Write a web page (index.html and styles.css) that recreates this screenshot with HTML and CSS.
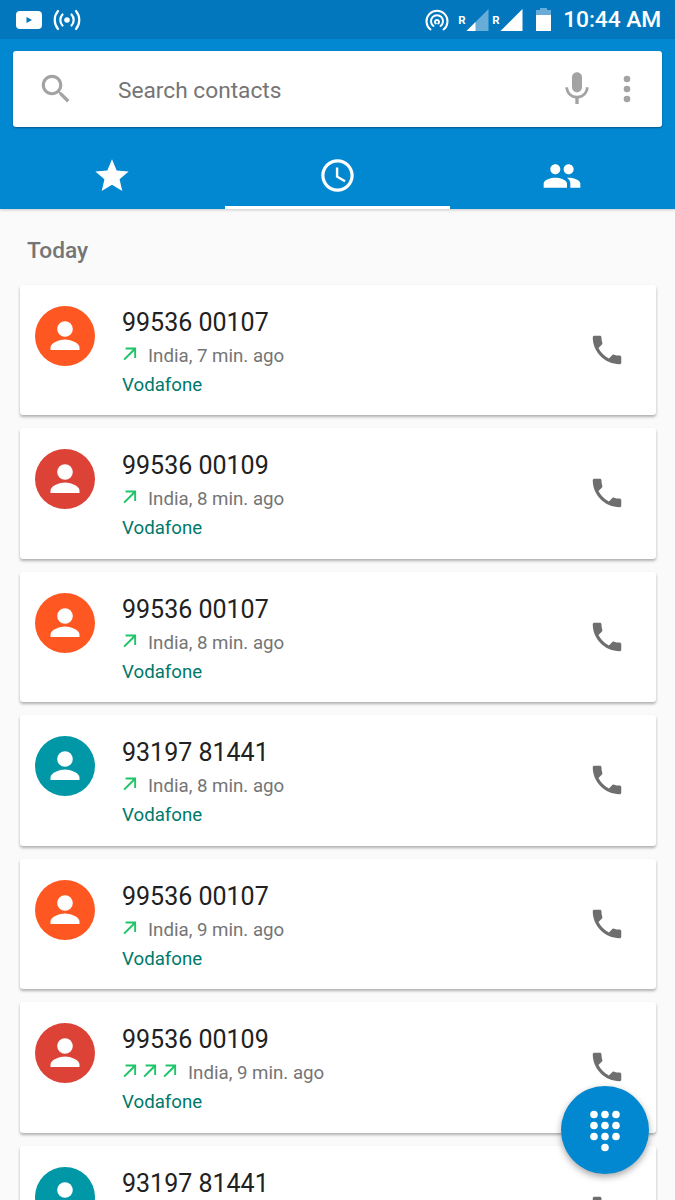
FILE: index.html
```html
<!DOCTYPE html>
<html lang="en">
<head>
<meta charset="utf-8">
<title>Phone</title>
<link rel="stylesheet" href="styles.css">
</head>
<body>
<svg class="defs" aria-hidden="true">
  <symbol id="phone" viewBox="0 0 24 24"><path d="M6.62 10.79c1.44 2.83 3.76 5.14 6.59 6.59l2.2-2.2c.27-.27.67-.36 1.02-.24 1.12.37 2.33.57 3.57.57.55 0 1 .45 1 1V20c0 .55-.45 1-1 1-9.39 0-17-7.61-17-17 0-.55.45-1 1-1h3.5c.55 0 1 .45 1 1 0 1.25.2 2.45.57 3.57.11.35.03.74-.25 1.02l-2.2 2.2z"/></symbol>
  <symbol id="person" viewBox="0 0 60 60"><circle cx="30" cy="23" r="7.8"/><path d="M15.500 44v-2.500c0-5 9.500-8 14.500-8s14.500 3 14.500 8V44z"/></symbol>
  <symbol id="made" viewBox="0 0 16 16"><path d="M3.600 1.600v1.900h7.200L1.400 12.900l1.400 1.400 9.400-9.400v7.200h1.900V1.600z"/></symbol>
</svg>
<div class="screen">
  <header class="top">
    <div class="status">
      <div class="status-left">
        <svg class="yt" viewBox="0 0 26 18"><rect width="26" height="18" rx="4" fill="#fff"/><path d="M10.500 6l5.500 3-5.500 3z" fill="#0277bd"/></svg>
        <svg class="cast" viewBox="0 0 28 22" fill="none" stroke="#fff" stroke-width="2.200" stroke-linecap="round"><circle cx="14" cy="11" r="2.800" fill="#fff" stroke="none"/><path d="M9.500 5.500a8 8 0 0 0 0 11M18.500 5.500a8 8 0 0 1 0 11M5 2a14 14 0 0 0 0 18M23 2a14 14 0 0 1 0 18"/></svg>
      </div>
      <div class="status-right">
        <svg class="hotspot" viewBox="0 0 24 22" fill="none" stroke="#fff" stroke-width="2" stroke-linecap="round"><path d="M5.500 20.500a10.500 10.500 0 1 1 13 0M8.500 17a6 6 0 1 1 7 0"/><path d="M10.800 14.500a2 2 0 1 1 2.400 0"/></svg>
        <span class="r r-one">R</span>
        <svg class="sig sig-one" viewBox="0 0 22 22"><path d="M22 0v22H0z" fill="#fff" fill-opacity=".4"/><path d="M9 13v9H0z" fill="#fff"/></svg>
        <span class="r r-two">R</span>
        <svg class="sig sig-two" viewBox="0 0 22 22"><path d="M22 0v22H0z" fill="#fff"/></svg>
        <svg class="batt" viewBox="0 0 15 23"><path d="M4 0h7v2h4v21H0V2h4z" fill="#fff" fill-opacity=".4"/><path d="M0 7h15v16H0z" fill="#fff"/></svg>
        <span class="clock-text">10:44 AM</span>
      </div>
    </div>
    <div class="search">
      <svg class="ic-search" viewBox="0 0 24 24"><path d="M15.500 14h-.79l-.28-.27C15.410 12.590 16 11.110 16 9.500 16 5.910 13.090 3 9.500 3S3 5.910 3 9.500 5.910 16 9.500 16c1.610 0 3.090-.59 4.230-1.570l.27.28v.79l5 4.990L20.490 19l-4.990-5zm-6 0C7.010 14 5 11.990 5 9.500S7.010 5 9.500 5 14 7.010 14 9.500 11.990 14 9.500 14z"/></svg>
      <span class="search-label">Search contacts</span>
      <svg class="ic-mic" viewBox="0 0 24 24"><path d="M12 14c1.660 0 2.990-1.340 2.990-3L15 5c0-1.660-1.340-3-3-3S9 3.340 9 5v6c0 1.660 1.340 3 3 3zm5.300-3c0 3-2.540 5.100-5.300 5.100S6.700 14 6.700 11H5c0 3.410 2.720 6.230 6 6.720V21h2v-3.280c3.280-.48 6-3.300 6-6.720h-1.700z"/></svg>
      <svg class="ic-more" viewBox="0 0 8 28"><circle cx="4" cy="4" r="3.300"/><circle cx="4" cy="14" r="3.300"/><circle cx="4" cy="24" r="3.300"/></svg>
    </div>
    <nav class="tabs">
      <div class="tab"><svg class="tab-star" viewBox="0 0 24 24"><path d="M12 17.270L18.180 21l-1.640-7.030L22 9.240l-7.190-.61L12 2 9.190 8.630 2 9.240l5.460 4.730L5.820 21z"/></svg></div>
      <div class="tab tab-active"><svg class="tab-clock" viewBox="0 0 24 24"><path d="M11.990 2C6.470 2 2 6.480 2 12s4.470 10 9.990 10C17.520 22 22 17.520 22 12S17.520 2 11.990 2zM12 20c-4.420 0-8-3.580-8-8s3.580-8 8-8 8 3.580 8 8-3.580 8-8 8zm.5-13H11v6l5.250 3.150.75-1.230-4.500-2.670z"/></svg></div>
      <div class="tab"><svg class="tab-people" viewBox="0 0 24 24"><path d="M16 11c1.660 0 2.990-1.340 2.990-3S17.660 5 16 5c-1.660 0-3 1.340-3 3s1.340 3 3 3zm-8 0c1.660 0 2.990-1.340 2.990-3S9.660 5 8 5C6.340 5 5 6.340 5 8s1.340 3 3 3zm0 2c-2.330 0-7 1.170-7 3.500V19h14v-2.500c0-2.330-4.670-3.500-7-3.500zm8 0c-.29 0-.62.02-.97.05 1.160.84 1.970 1.970 1.970 3.450V19h6v-2.500c0-2.330-4.670-3.500-7-3.500z"/></svg></div>
    </nav>
  </header>

  <main class="list">
    <h2 class="day">Today</h2>

    <article class="card">
      <div class="avatar orange"><svg><use href="#person"/></svg></div>
      <div class="info">
        <div class="num">99536 00107</div>
        <div class="meta"><span class="arrows"><svg><use href="#made"/></svg></span><span>India, 7 min. ago</span></div>
        <div class="sim">Vodafone</div>
      </div>
      <svg class="call"><use href="#phone"/></svg>
    </article>

    <article class="card">
      <div class="avatar red"><svg><use href="#person"/></svg></div>
      <div class="info">
        <div class="num">99536 00109</div>
        <div class="meta"><span class="arrows"><svg><use href="#made"/></svg></span><span>India, 8 min. ago</span></div>
        <div class="sim">Vodafone</div>
      </div>
      <svg class="call"><use href="#phone"/></svg>
    </article>

    <article class="card">
      <div class="avatar orange"><svg><use href="#person"/></svg></div>
      <div class="info">
        <div class="num">99536 00107</div>
        <div class="meta"><span class="arrows"><svg><use href="#made"/></svg></span><span>India, 8 min. ago</span></div>
        <div class="sim">Vodafone</div>
      </div>
      <svg class="call"><use href="#phone"/></svg>
    </article>

    <article class="card">
      <div class="avatar teal"><svg><use href="#person"/></svg></div>
      <div class="info">
        <div class="num">93197 81441</div>
        <div class="meta"><span class="arrows"><svg><use href="#made"/></svg></span><span>India, 8 min. ago</span></div>
        <div class="sim">Vodafone</div>
      </div>
      <svg class="call"><use href="#phone"/></svg>
    </article>

    <article class="card">
      <div class="avatar orange"><svg><use href="#person"/></svg></div>
      <div class="info">
        <div class="num">99536 00107</div>
        <div class="meta"><span class="arrows"><svg><use href="#made"/></svg></span><span>India, 9 min. ago</span></div>
        <div class="sim">Vodafone</div>
      </div>
      <svg class="call"><use href="#phone"/></svg>
    </article>

    <article class="card">
      <div class="avatar red"><svg><use href="#person"/></svg></div>
      <div class="info">
        <div class="num">99536 00109</div>
        <div class="meta"><span class="arrows"><svg><use href="#made"/></svg><svg><use href="#made"/></svg><svg><use href="#made"/></svg></span><span>India, 9 min. ago</span></div>
        <div class="sim">Vodafone</div>
      </div>
      <svg class="call"><use href="#phone"/></svg>
    </article>

    <article class="card">
      <div class="avatar teal"><svg><use href="#person"/></svg></div>
      <div class="info">
        <div class="num">93197 81441</div>
      </div>
      <svg class="call"><use href="#phone"/></svg>
    </article>
  </main>

  <button class="fab" aria-label="Dial pad">
    <svg viewBox="0 0 34 44"><circle cx="6" cy="6.500" r="3.800"/><circle cx="17" cy="6.500" r="3.800"/><circle cx="28" cy="6.500" r="3.800"/><circle cx="6" cy="17.500" r="3.800"/><circle cx="17" cy="17.500" r="3.800"/><circle cx="28" cy="17.500" r="3.800"/><circle cx="6" cy="28.500" r="3.800"/><circle cx="17" cy="28.500" r="3.800"/><circle cx="28" cy="28.500" r="3.800"/><circle cx="17" cy="39.500" r="3.800"/></svg>
  </button>
</div>
</body>
</html>
```
FILE: styles.css
```css
* { box-sizing: border-box; }
html, body { margin: 0; padding: 0; }
body { font-family: Roboto, "Liberation Sans", sans-serif; background: #fafafa; }
.defs { display: none; }
.screen { position: relative; width: 675px; height: 1200px; overflow: hidden; background: #fafafa; }

.top { background: #0288d1; height: 209px; box-shadow: 0 1px 3px rgba(0,0,0,.2); position: relative; }
.status { height: 39px; background: #0277bd; display: flex; justify-content: space-between; align-items: center; padding: 0 14px 0 16px; color: #fff; }
.status-left { display: flex; align-items: center; gap: 11px; }
.yt { width: 26px; height: 18px; }
.cast { width: 28px; height: 22px; }
.status-right { display: flex; align-items: center; }
.hotspot { width: 24px; height: 22px; margin-top: 2px; }
.r { font-size: 11.500px; font-weight: 700; align-self: flex-start; margin-top: 6px; width: 8px; }
.r-one { margin-left: 9px; }
.r-two { margin-left: 3px; }
.sig { width: 23px; height: 22px; margin-top: 2px; }
.sig-one { margin-left: 0; }
.sig-two { margin-left: 0; }
.batt { width: 15px; height: 23px; margin-left: 13px; }
.clock-text { font-size: 22.800px; font-weight: 500; margin-left: 12px; line-height: 1; margin-top: 2px; letter-spacing: -.1px; }

.search { margin: 12px 13px 0; height: 76px; background: #fff; border-radius: 3px; box-shadow: 0 1px 2px rgba(0,0,0,.35); display: flex; align-items: center; padding: 0 31px 0 24px; }
.ic-search { width: 38px; height: 38px; fill: #a3a3a3; flex: none; }
.search-label { font-size: 22.700px; color: #757575; margin-left: 43px; flex: 1; margin-top: 3px; }
.ic-mic { width: 40px; height: 40px; fill: #a3a3a3; flex: none; margin-right: 26px; }
.ic-more { width: 8px; height: 28px; fill: #a3a3a3; flex: none; }

.tabs { display: grid; grid-template-columns: repeat(3, 225px); height: 82px; }
.tab { display: flex; align-items: center; justify-content: center; height: 82px; padding-top: 15px; }
.tab svg { fill: #fff; }
.tab-star { width: 40px; height: 40px; margin-left: -2px; }
.tab-clock { width: 39px; height: 39px; margin-top: 3px; margin-left: -1px; }
.tab-people { width: 40px; height: 40px; margin-left: -1px; }
.tab-active { border-bottom: 3px solid #fff; }

.list { padding: 0 19px 0 20px; }
.day { margin: 0; font-size: 22.700px; font-weight: 500; color: #757575; padding: 28px 0 0 7px; height: 75.700px; line-height: 28px; }
.card { display: flex; align-items: flex-start; height: 130.500px; margin-bottom: 13px; background: #fff; border-radius: 3px; box-shadow: 0 2px 3px rgba(0,0,0,.3); padding: 21px 0 0 15px; position: relative; }
.avatar { width: 60px; height: 60px; border-radius: 50%; flex: none; display: flex; }
.avatar svg { width: 60px; height: 60px; fill: #fff; }
.orange { background: #ff5722; }
.red { background: #dd4237; }
.teal { background: #0097a7; }
.info { margin-left: 27px; flex: 1; padding-top: 1px; }
.num { font-size: 25px; line-height: 32px; color: #212121; }
.meta { display: flex; align-items: center; font-size: 18.700px; color: #757575; line-height: 30px; margin-top: 2px; }
.arrows { display: flex; gap: 4px; margin-right: 10px; margin-top: -4px; }
.arrows svg { width: 16px; height: 16px; fill: #1ec468; }
.sim { font-size: 18.700px; line-height: 28px; color: #00796b; }
.call { width: 38px; height: 38px; fill: #6e6e6e; flex: none; margin: 25px 30px 0 0; }

.fab { position: absolute; left: 561px; top: 1086px; width: 88px; height: 88px; border: 0; border-radius: 50%; background: #0288d1; box-shadow: 0 3px 7px rgba(0,0,0,.35); padding: 0; display: flex; align-items: center; justify-content: center; }
.fab svg { width: 34px; height: 44px; fill: #fff; }
```
